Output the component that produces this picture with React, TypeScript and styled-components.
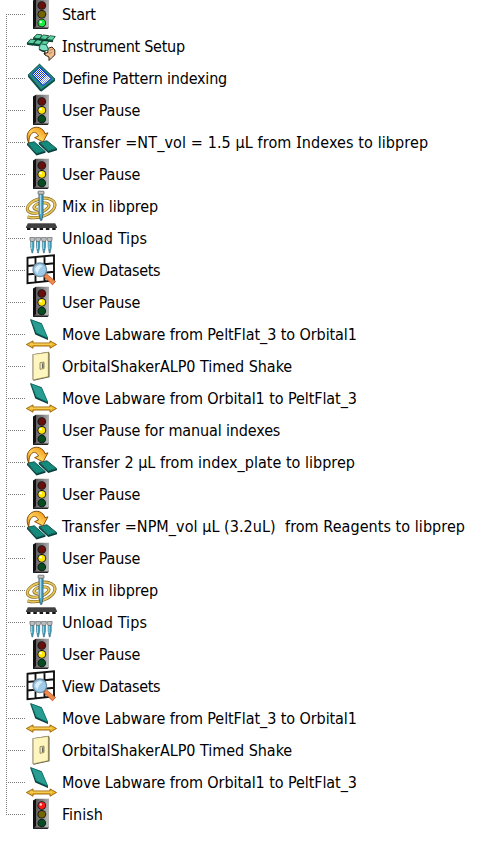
import React from 'react';
import styled, { createGlobalStyle } from 'styled-components';

const GlobalStyle = createGlobalStyle`
  body { margin: 0; background: #fff; }
`;

const Page = styled.main`
  width: 492px;
  height: 846px;
  overflow: hidden;
  background: #fff;
`;

const Tree = styled.ul`
  list-style: none;
  margin: -2px 0 0;
  padding: 0 0 0 6px;
`;

const Row = styled.li`
  display: flex;
  height: 32px;
`;

/* Dotted connector: the trunk runs full height except at both ends of the tree. */
const Branch = styled.span<{ $first: boolean; $last: boolean }>`
  flex: none;
  width: 19px;
  background-image:
    repeating-linear-gradient(to bottom, #808080 0 1px, transparent 1px 2px),
    repeating-linear-gradient(to right, #808080 0 1px, transparent 1px 2px);
  background-size: 1px ${p => (p.$first ? '16px' : p.$last ? '17px' : '32px')}, 19px 1px;
  background-position: 0 ${p => (p.$first ? '16px' : '0')}, 0 16px;
  background-repeat: no-repeat;
`;

const Icon = styled.svg`
  flex: none;
  width: 32px;
  height: 32px;
`;

const Label = styled.span<{ $tracking: number }>`
  margin-left: 5px;
  padding-top: 1px;
  white-space: pre;
  color: #000;
  font: 16px/31px 'DejaVu Sans Condensed', 'DejaVu Sans', sans-serif;
  letter-spacing: ${p => p.$tracking}px;
`;

const SerifI = styled.span`
  font-family: 'Noto Sans', sans-serif;
  line-height: 1;
`;

type Signal = 'red' | 'yellow' | 'green';

function TrafficLight({ on }: { on: Signal }) {
  const lamps: [Signal, number, string, string][] = [
    ['red', 7.5, '#650f0f', '#ff1a1a'],
    ['yellow', 16.3, '#756500', '#ffe600'],
    ['green', 25, '#064b22', '#16ef3b'],
  ];
  return (
    <Icon viewBox="0 0 32 32">
      <defs>
        <linearGradient id="housing" x1="0" y1="0" x2="1" y2="0.25">
          <stop offset="0" stopColor="#4a4a4a" />
          <stop offset=".5" stopColor="#777" />
          <stop offset="1" stopColor="#b5b5b5" />
        </linearGradient>
      </defs>
      <path d="M8 2.5 11 .8V29.5L8 31Z" fill="#111" />
      <path d="M11 .8H24V29L22.5 31H8L11 28Z" fill="url(#housing)" />
      <path d="M8 31V29.5H24L22.5 31Z" fill="#222" />
      {lamps.map(([name, cy, off, lit]) => (
        <g key={name}>
          <circle cx="16.8" cy={cy} r="4.3" fill="#151515" />
          <circle cx="16.8" cy={cy} r="3.4" fill={on === name ? lit : off} />
          {on === name && <circle cx="15.8" cy={cy - 1} r="1.2" fill="#fff" opacity=".85" />}
        </g>
      ))}
    </Icon>
  );
}

function DeckIcon() {
  const plates = [[9.5, 4.3], [16, 5], [22.6, 5.8], [3.3, 9.2], [9.6, 9.9], [16.2, 10.6]];
  return (
    <Icon viewBox="0 0 32 32">
      {plates.map(([x, y]) => (
        <g key={`${x}-${y}`} stroke="#082c22" strokeWidth=".9" strokeLinejoin="round">
          <path d={`M${x + 2.5} ${y}L${x + 7.6} ${y + 0.7} ${x + 5} ${y + 4.2}V${y + 6}L${x - 0.9} ${y + 5.2}V${y + 3.2}Z`} fill="#06583e" />
          <path d={`M${x + 2.5} ${y + 0.3}L${x + 7.2} ${y + 0.9} ${x + 4.8} ${y + 4} ${x - 0.4} ${y + 3.3}Z`} fill="#5dd0a0" stroke="none" />
        </g>
      ))}
      <path d="M22.5 18.5 27 17 29.8 20V25L26.5 28 24 30.5V27L20 25 19 23.5 23 22.5Z" fill="#f1bd8b" stroke="#3a2413" strokeWidth="1" />
      <path d="M24.5 20 28 19.5M24 24 27 22" stroke="#a06b45" strokeWidth=".7" fill="none" />
      <path d="M15.5 13.8 21.5 14.8 23.5 20 17 21.2 14 18.5Z" fill="#7be0bf" stroke="#166a52" strokeWidth="1" />
      <path d="M14 19.5 20 22 19.5 24.5" fill="none" stroke="#1c2622" strokeWidth="1.3" />
    </Icon>
  );
}

function PatternIcon() {
  return (
    <Icon viewBox="0 0 32 32">
      <defs>
        <pattern id="wells" width="2" height="2" patternUnits="userSpaceOnUse">
          <rect width="2" height="2" fill="#1233d0" />
          <rect width="1" height="1" fill="#fff" />
          <rect x="1" y="1" width="1" height="1" fill="#fff" />
        </pattern>
      </defs>
      <path d="M3 13 14.5 2 30 17V19L16.5 29.5 15 29 3 14.8Z" fill="#0b4a49" />
      <path d="M3.3 12.7 14.5 2.2 30 17 16.2 27.8Z" fill="#258c83" stroke="#135853" strokeWidth=".8" />
      <path d="M6.8 12.2 14.8 4.8 26.8 16.6 17.8 24Z" fill="#1233d0" />
      <path d="M7.8 12.2 14.8 5.8 25.8 16.6 17.8 22.8Z" fill="url(#wells)" />
      <path d="M15 19.5 22.5 13.4 25.8 16.6 17.8 22.8Z" fill="#fff" opacity=".5" />
    </Icon>
  );
}

function TealPlate({ d, edge }: { d: string; edge: string }) {
  return (
    <>
      <path d={edge} fill="#063d3c" />
      <path d={d} fill="#148a7c" stroke="#07504b" strokeWidth=".9" />
    </>
  );
}

function TransferIcon() {
  return (
    <Icon viewBox="0 0 32 32">
      <defs>
        <linearGradient id="swoop" x1="0" y1="1" x2="1" y2="0">
          <stop offset="0" stopColor="#ed8300" />
          <stop offset=".45" stopColor="#ffd15b" />
          <stop offset="1" stopColor="#ee8500" />
        </linearGradient>
      </defs>
      <TealPlate d="M2.5 17.2 9.3 15.8 20 25.3 11.5 27.6Z" edge="M2 17.2 11.5 27.6 20.5 25V26.8L11.5 29.6 2 19Z" />
      <TealPlate d="M14.3 16.3 22 14.8 31.5 22.5 23.3 25Z" edge="M13.8 16.3 23.3 25 32 22.5V24.2L23.3 27 13.8 18.2Z" />
      <path
        d="M3.8 17C1 11.5 1.6 5.7 6.8 2.5 12 -.5 18.5 2 20 7.8L23 6.8 18 16 9.6 11.6 13.5 10C11.8 6.3 9 5.5 7 7.2 4.5 9.2 3.8 12.7 3.8 17Z"
        fill="url(#swoop)"
        stroke="#7c4300"
        strokeWidth=".9"
      />
    </Icon>
  );
}

function MixIcon() {
  const coil = 'M2.5 27C12 29.5 24 25.5 28.8 18.8 33.5 10.5 23 6.3 14 9 5.5 11.4 .8 16.7 2.8 20.7 5 25 18 23.5 23 17.7 27 13.2 18 11.2 12 14.2 7.3 16.7 8.5 19.7 13 19.2';
  return (
    <Icon viewBox="0 0 32 32">
      <path d={coil} fill="none" stroke="#75601c" strokeWidth="3" />
      <path d={coil} fill="none" stroke="#e8c558" strokeWidth="1.9" />
      <path d="M14 3H18V24L16.8 30.3H15.4L14 24Z" fill="#4caccc" stroke="#28526a" strokeWidth=".8" />
      <path d="M15.3 4V24" stroke="#b7eafa" strokeWidth="1" />
      <rect x="13" y="1.2" width="6" height="3" rx=".5" fill="#c5c5c5" stroke="#555" strokeWidth=".7" />
    </Icon>
  );
}

function TipsIcon() {
  return (
    <Icon viewBox="0 0 32 32">
      <path d="M3 1H30L32 5V6H1V5Z" fill="#404040" />
      <path d="M3 1.5H30" stroke="#777" />
      <path d="M2 7H32" stroke="#151515" strokeWidth="2" strokeDasharray="3.5 2.8" />
      {[4.7, 10.5, 16.3, 22.1].map(x => (
        <g key={x}>
          <path d={`M${x + 1} 18H${x + 4.2}V25L${x + 3} 31H${x + 2.2}L${x + 1} 25Z`} fill="#3f9dba" stroke="#285f78" strokeWidth=".5" />
          <path d={`M${x + 2} 19V27`} stroke="#baf1ff" strokeWidth=".8" />
          <path d={`M${x + 0.2} 15.5H${x + 5}V17.5L${x + 4.2} 19.5H${x + 1}L${x + 0.2} 17.5Z`} fill="#b9bec0" stroke="#555" strokeWidth=".6" />
        </g>
      ))}
    </Icon>
  );
}

function DatasetIcon() {
  return (
    <Icon viewBox="0 0 32 32">
      <path d="M2.5 3.8 29 1.2V26.5L2.5 29.2ZM2.5 12 29 9.3M2.5 20.5 29 17.8M10.5 3V28.4M19.5 2.1V27.5" fill="none" stroke="#111" strokeWidth="1.9" />
      <path d="M18.8 22.5 21.5 20 30.5 27.5 27.5 30.8Z" fill="#f08a4c" stroke="#b3501f" strokeWidth=".8" />
      <circle cx="14.8" cy="15.8" r="6.8" fill="#9fcbe9" stroke="#7390a5" strokeWidth="1.3" />
      <path d="M10 16C10.5 12 14.5 10.3 17.5 12 14.5 14 13 17 12.5 20Z" fill="#e4f5ff" opacity=".85" />
    </Icon>
  );
}

function MoveIcon() {
  return (
    <Icon viewBox="0 0 32 32">
      <path d="M5 1.3 16.5 5.2 23 20.5V22L10.3 16.5Z" fill="#073d3b" />
      <path d="M6 1.7 16.5 5.7 22.8 20.2 11.2 15Z" fill="#2a9d93" stroke="#087069" strokeWidth=".7" />
      <path d="M1.4 26.5 8 22.9V25H25V22.9L31.5 26.5 25 30.2V28H8V30.2Z" fill="#efb72d" stroke="#936000" strokeWidth=".9" />
      <path d="M5 26.1H27" stroke="#ffe078" strokeWidth=".8" />
    </Icon>
  );
}

function ShakerIcon() {
  return (
    <Icon viewBox="0 0 32 32">
      <path d="M7.6 4.2 23.5 1.8 24.5 3V27.2L8.6 30.8 7.6 29.8Z" fill="#59543b" />
      <path d="M8.2 4.6 23.2 2.4V26.6L8.2 29.8Z" fill="#fff6bf" stroke="#b8a86d" strokeWidth=".6" />
      <path d="M15 12.7 19 12V18.5L15 19.3Z" fill="#eee7bd" stroke="#817952" strokeWidth=".8" />
      <path d="M17.8 13.3V18" stroke="#555" strokeWidth="1.3" />
    </Icon>
  );
}

const icons = {
  start: <TrafficLight on="green" />,
  pause: <TrafficLight on="yellow" />,
  finish: <TrafficLight on="red" />,
  setup: <DeckIcon />,
  pattern: <PatternIcon />,
  transfer: <TransferIcon />,
  mix: <MixIcon />,
  tips: <TipsIcon />,
  view: <DatasetIcon />,
  move: <MoveIcon />,
  shake: <ShakerIcon />,
};

type Step = { icon: keyof typeof icons; text: string; tracking?: number };

const pause: Step = { icon: 'pause', text: 'User Pause', tracking: -0.13 };
const mix: Step = { icon: 'mix', text: 'Mix in libprep', tracking: -0.07 };
const tips: Step = { icon: 'tips', text: 'Unload Tips', tracking: 0.1 };
const view: Step = { icon: 'view', text: 'View Datasets', tracking: -0.33 };
const toShaker: Step = { icon: 'move', text: 'Move Labware from PeltFlat_3 to Orbital1', tracking: -0.08 };
const toPelt: Step = { icon: 'move', text: 'Move Labware from Orbital1 to PeltFlat_3', tracking: -0.08 };
const shake: Step = { icon: 'shake', text: 'OrbitalShakerALP0 Timed Shake', tracking: -0.04 };

const steps: Step[] = [
  { icon: 'start', text: 'Start', tracking: -0.3 },
  { icon: 'setup', text: 'Instrument Setup', tracking: -0.25 },
  { icon: 'pattern', text: 'Define Pattern indexing', tracking: -0.19 },
  pause,
  { icon: 'transfer', text: 'Transfer =NT_vol = 1.5 µL from Indexes to libprep', tracking: 0.11 },
  pause,
  mix,
  tips,
  view,
  pause,
  toShaker,
  shake,
  toPelt,
  { icon: 'pause', text: 'User Pause for manual indexes', tracking: -0.14 },
  { icon: 'transfer', text: 'Transfer 2 µL from index_plate to libprep', tracking: 0.02 },
  pause,
  { icon: 'transfer', text: 'Transfer =NPM_vol µL (3.2uL)  from Reagents to libprep', tracking: 0.055 },
  pause,
  mix,
  tips,
  pause,
  view,
  toShaker,
  shake,
  toPelt,
  { icon: 'finish', text: 'Finish', tracking: 0 },
];

function StepText({ text }: { text: string }) {
  const at = text.indexOf('I');
  if (at < 0) return <>{text}</>;
  return (
    <>
      {text.slice(0, at)}
      <SerifI>I</SerifI>
      {text.slice(at + 1)}
    </>
  );
}

export default function App() {
  return (
    <Page>
      <GlobalStyle />
      <Tree>
        {steps.map((step, i) => (
          <Row key={i}>
            <Branch $first={i === 0} $last={i === steps.length - 1} />
            {icons[step.icon]}
            <Label $tracking={step.tracking ?? 0}>
              <StepText text={step.text} />
            </Label>
          </Row>
        ))}
      </Tree>
    </Page>
  );
}
